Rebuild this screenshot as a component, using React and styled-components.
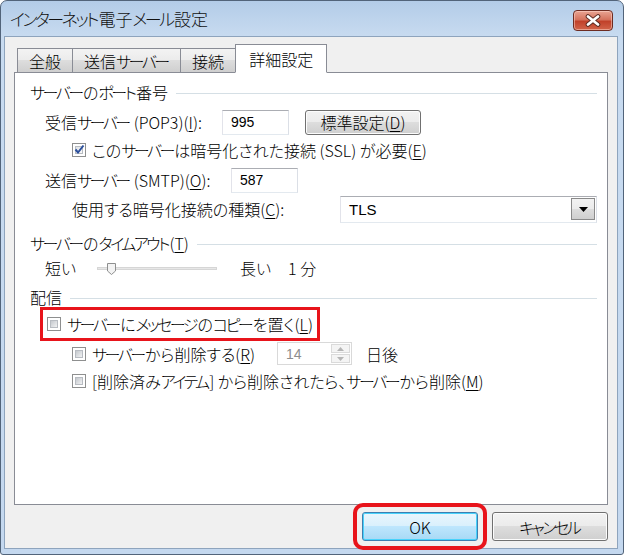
import { Children } from 'react';
import { createGlobalStyle, styled } from 'styled-components';

const GlobalStyle = createGlobalStyle`
  html, body { margin: 0; padding: 0; background: #fff; }
  body {
    font-family: "Noto Sans CJK JP", "Noto Sans", sans-serif;
    font-feature-settings: "palt";
    font-weight: 300;
    color: #000;
  }
`;

// Meiryo UI draws katakana narrower than kanji; squeeze katakana runs to match
const Narrow = styled.span`
  letter-spacing: -2.5px;
  margin-right: 1.5px;
`;

function Jp({ children }) {
  return Children.map(children, (child) =>
    typeof child === 'string'
      ? child
          .split(/([\u30A0-\u30FF]+)/)
          .map((part, i) => (i % 2 ? <Narrow key={i}>{part}</Narrow> : part))
      : child
  );
}

const Window = styled.div`
  width: 624px;
  height: 555px;
  box-sizing: border-box;
  border: 1px solid #52647a;
  border-radius: 7px 7px 3px 3px;
  background: linear-gradient(#b3cce8, #c8dbf0 36px, #c4d8ef);
  padding: 0 5px 5px 3px;
  display: flex;
  flex-direction: column;
`;

const TitleBar = styled.div`
  height: 35px;
  display: flex;
  align-items: flex-start;
  justify-content: space-between;
  padding: 0 5px 0 6px;
`;

const Title = styled.span`
  font-size: 17px;
  line-height: 35px;
  color: #111;
`;

const CloseButton = styled.span`
  margin-top: 9px;
  width: 40px;
  height: 21px;
  box-sizing: border-box;
  border: 1px solid #6d2c22;
  border-radius: 4px;
  background: linear-gradient(#e9a493, #d5735e 45%, #c1412a 55%, #d2644a);
  box-shadow: inset 0 0 0 1px rgba(255, 220, 210, 0.5);
  display: flex;
  align-items: center;
  justify-content: center;
`;

const Client = styled.div`
  flex: 1;
  background: #f0f0f0;
  border: 1px solid #8ea4bd;
  padding: 7px 9px 7px 9px;
  display: flex;
  flex-direction: column;
`;

const TabStrip = styled.div`
  height: 29px;
  display: flex;
  align-items: flex-end;
  padding-left: 3px;
  margin-bottom: -1px;
`;

const Tab = styled.span`
  position: relative;
  z-index: ${(p) => (p.$active ? 2 : 1)};
  height: ${(p) => (p.$active ? '29px' : '25px')};
  box-sizing: border-box;
  padding: 0 ${(p) => (p.$active ? '13px' : '11px')};
  margin: 0 ${(p) => (p.$active ? '-1px' : '0')} 0 -1px;
  border: 1px solid #898c95;
  border-bottom: ${(p) => (p.$active ? '1px solid #fff' : '1px solid #898c95')};
  background: ${(p) =>
    p.$active ? '#fff' : 'linear-gradient(#f3f3f3, #ebebeb 50%, #dddddd 50%, #cfcfcf)'};
  font-size: 16px;
  display: flex;
  align-items: center;
  &:first-child { margin-left: 0; }
`;

const Panel = styled.div`
  flex: 1;
  background: #fff;
  border: 1px solid #898c95;
  padding: 9px 10px 0 15px;
  display: flex;
  flex-direction: column;
  font-size: 16px;
`;

const GroupHeading = styled.div`
  height: 20px;
  margin-top: ${(p) => p.$top || 0}px;
  display: flex;
  align-items: center;
  gap: 8px;
  &::after {
    content: '';
    flex: 1;
    height: 1px;
    background: #d5dfe5;
    margin-top: 2px;
  }
`;

const Row = styled.div`
  height: ${(p) => p.$h}px;
  margin-top: ${(p) => p.$top || 0}px;
  padding-left: ${(p) => p.$indent || 0}px;
  display: flex;
  align-items: center;
`;

const Label = styled.span`
  width: ${(p) => (p.$w ? `${p.$w}px` : 'auto')};
  flex-shrink: 0;
  white-space: nowrap;
`;

const Key = styled.span`
  text-decoration: underline;
  text-underline-offset: 2px;
`;

const TextBox = styled.span`
  width: 67px;
  height: 25px;
  box-sizing: border-box;
  border: 1px solid #abadb3;
  border-color: #abadb3 #dbdfe6 #e3e9ef #e2e3ea;
  background: #fff;
  padding-left: 8px;
  font-family: "Liberation Sans", sans-serif;
  font-size: 14px;
  display: flex;
  align-items: center;
`;

const PushButton = styled.span`
  width: ${(p) => p.$w || 116}px;
  height: ${(p) => p.$h || 25}px;
  margin-left: ${(p) => p.$left || 0}px;
  box-sizing: border-box;
  border: 1px solid ${(p) => (p.$default ? '#3c7fb1' : '#707070')};
  border-radius: 3px;
  background: ${(p) =>
    p.$default
      ? 'linear-gradient(#eaf6fd, #d9f0fc 50%, #bee6fd 50%, #a7d9f5)'
      : 'linear-gradient(#f2f2f2, #ebebeb 50%, #dddddd 50%, #cfcfcf)'};
  box-shadow: inset 0 0 0 1px ${(p) => (p.$default ? '#48d2fb' : '#fcfcfc')};
  display: flex;
  align-items: center;
  justify-content: center;
  font-size: 16px;
  flex-shrink: 0;
`;

const BoxWrap = styled.span`
  position: relative;
  width: 14px;
  height: 14px;
  box-sizing: border-box;
  border: 1px solid #8e8f8f;
  background: #fff;
  padding: 2px;
  display: inline-flex;
  flex-shrink: 0;
  margin-right: 6px;
  &::before {
    content: '';
    flex: 1;
    border: 1px solid #b8bcc2;
    background: ${(p) =>
      p.$checked ? 'linear-gradient(135deg, #dfe2e6, #fafafa)' : 'linear-gradient(135deg, #c4c8cd, #f1f2f3)'};
  }
`;

const CheckMark = styled.svg`
  position: absolute;
  left: 0;
  top: -1px;
`;

function Checkbox({ checked }) {
  return (
    <BoxWrap $checked={checked}>
      {checked && (
        <CheckMark width="13" height="13" viewBox="0 0 13 13">
          <path d="M2.5 6.5 L5 9.5 L10.5 2.5" fill="none" stroke="#2b4f9c" strokeWidth="2" />
        </CheckMark>
      )}
    </BoxWrap>
  );
}

const Select = styled.span`
  width: 257px;
  height: 27px;
  box-sizing: border-box;
  border: 1px solid #abadb3;
  border-color: #abadb3 #dbdfe6 #e3e9ef #e2e3ea;
  background: #fff;
  display: flex;
  align-items: center;
  justify-content: space-between;
  padding: 0 1px 0 8px;
  font-family: "Liberation Sans", sans-serif;
  font-size: 15px;
`;

const DropButton = styled.span`
  width: 24px;
  height: 22px;
  box-sizing: border-box;
  border: 1px solid #8a8a8a;
  background: linear-gradient(#f2f2f2, #ebebeb 50%, #dddddd 50%, #cfcfcf);
  display: flex;
  align-items: center;
  justify-content: center;
`;

const Track = styled.span`
  position: relative;
  width: 120px;
  height: 3px;
  box-sizing: border-box;
  border: 1px solid #d6d6d6;
  background: #e7e7e7;
  margin: 0 23px 0 0;
`;

const Thumb = styled.svg`
  position: absolute;
  left: 9px;
  top: -5px;
`;

const Spinner = styled.span`
  width: 75px;
  height: 23px;
  box-sizing: border-box;
  border: 1px solid #d9d9d9;
  background: #fff;
  display: flex;
  align-items: center;
  justify-content: space-between;
  padding: 0 1px 0 8px;
  font-family: "Liberation Sans", sans-serif;
  font-size: 14px;
  color: #8d8d8d;
`;

const SpinButtons = styled.span`
  width: 19px;
  height: 19px;
  display: flex;
  flex-direction: column;
  gap: 1px;
`;

const SpinButton = styled.span`
  flex: 1;
  border: 1px solid #dadada;
  background: #f4f4f4;
  display: flex;
  align-items: center;
  justify-content: center;
`;

const Highlight = styled.span`
  display: inline-flex;
  align-items: center;
  border: ${(p) => p.$width || 3}px solid #e8141b;
  border-radius: ${(p) => p.$radius || 0}px;
`;

const CopyBox = styled(Highlight)`
  height: 34px;
  box-sizing: border-box;
  margin-left: 10px;
  padding: 0 4px 0 4px;
  align-self: flex-start;
`;

const OkRing = styled(Highlight)`
  margin: -9px;
  padding: 5px;
`;

const Footer = styled.div`
  margin-top: 7px;
  display: flex;
  justify-content: flex-end;
  gap: 14px;
`;

const Gap = styled.span`
  width: ${(p) => p.$w}px;
  flex-shrink: 0;
`;

export default function App() {
  return (
    <>
      <GlobalStyle />
      <Window>
        <TitleBar>
          <Title>
            <Jp>インターネット電子メール設定</Jp>
          </Title>
          <CloseButton>
            <svg width="18" height="13" viewBox="0 0 18 13">
              <path d="M4 2.5 L14 10.5 M14 2.5 L4 10.5" stroke="#5a2a22" strokeWidth="4.6" strokeLinecap="round" />
              <path d="M4 2.5 L14 10.5 M14 2.5 L4 10.5" stroke="#fff" strokeWidth="2.8" strokeLinecap="round" />
            </svg>
          </CloseButton>
        </TitleBar>
        <Client>
          <TabStrip>
            <Tab>全般</Tab>
            <Tab>
              <Jp>送信サーバー</Jp>
            </Tab>
            <Tab>接続</Tab>
            <Tab $active>詳細設定</Tab>
          </TabStrip>
          <Panel>
            <GroupHeading>
              <span>
                <Jp>サーバーのポート番号</Jp>
              </span>
            </GroupHeading>
            <Row $h={26} $top={7} $indent={15}>
              <Label $w={177}>
                <Jp>受信サーバー (POP3)(</Jp>
                <Key>I</Key>):
              </Label>
              <TextBox>995</TextBox>
              <PushButton $left={16}>
                標準設定(<Key>D</Key>)
              </PushButton>
            </Row>
            <Row $h={20} $top={5} $indent={42}>
              <Checkbox checked />
              <Label>
                <Jp>このサーバーは暗号化された接続 (SSL) が必要(</Jp>
                <Key>E</Key>)
              </Label>
            </Row>
            <Row $h={26} $top={7} $indent={15}>
              <Label $w={186}>
                <Jp>送信サーバー (SMTP)(</Jp>
                <Key>O</Key>):
              </Label>
              <TextBox>587</TextBox>
            </Row>
            <Row $h={28} $top={2} $indent={42}>
              <Label $w={268}>
                使用する暗号化接続の種類(<Key>C</Key>):
              </Label>
              <Select>
                TLS
                <DropButton>
                  <svg width="9" height="5" viewBox="0 0 9 5">
                    <path d="M0 0 H9 L4.5 5 Z" fill="#000" />
                  </svg>
                </DropButton>
              </Select>
            </Row>
            <GroupHeading $top={10}>
              <span>
                <Jp>サーバーのタイムアウト(</Jp>
                <Key>T</Key>)
              </span>
            </GroupHeading>
            <Row $h={20} $top={5} $indent={15}>
              <Label $w={52}>短い</Label>
              <Track>
                <Thumb width="9" height="12" viewBox="0 0 9 12">
                  <path d="M0.5 0.5 H8.5 V8 L4.5 11.5 L0.5 8 Z" fill="#f3f3f3" stroke="#8e8f8f" />
                </Thumb>
              </Track>
              <Label>長い</Label>
              <Gap $w={17} />
              <Label>1 分</Label>
            </Row>
            <GroupHeading $top={9}>
              <span>配信</span>
            </GroupHeading>
            <CopyBox>
              <Checkbox />
              <Label>
                <Jp>サーバーにメッセージのコピーを置く(</Jp>
                <Key>L</Key>)
              </Label>
            </CopyBox>
            <Row $h={23} $top={1} $indent={42}>
              <Checkbox />
              <Label $w={185}>
                <Jp>サーバーから削除する(</Jp>
                <Key>R</Key>)
              </Label>
              <Spinner>
                14
                <SpinButtons>
                  <SpinButton>
                    <svg width="7" height="4" viewBox="0 0 7 4">
                      <path d="M0 4 L3.5 0 L7 4 Z" fill="#b5b5b5" />
                    </svg>
                  </SpinButton>
                  <SpinButton>
                    <svg width="7" height="4" viewBox="0 0 7 4">
                      <path d="M0 0 L3.5 4 L7 0 Z" fill="#b5b5b5" />
                    </svg>
                  </SpinButton>
                </SpinButtons>
              </Spinner>
              <Gap $w={14} />
              <Label>日後</Label>
            </Row>
            <Row $h={20} $top={6} $indent={42}>
              <Checkbox />
              <Label>
                <Jp>[削除済みアイテム] から削除されたら、サーバーから削除(</Jp>
                <Key>M</Key>)
              </Label>
            </Row>
          </Panel>
          <Footer>
            <OkRing $width={4} $radius={10}>
              <PushButton $default $h={29}>OK</PushButton>
            </OkRing>
            <PushButton $h={29}>
              <Jp>キャンセル</Jp>
            </PushButton>
          </Footer>
        </Client>
      </Window>
    </>
  );
}
